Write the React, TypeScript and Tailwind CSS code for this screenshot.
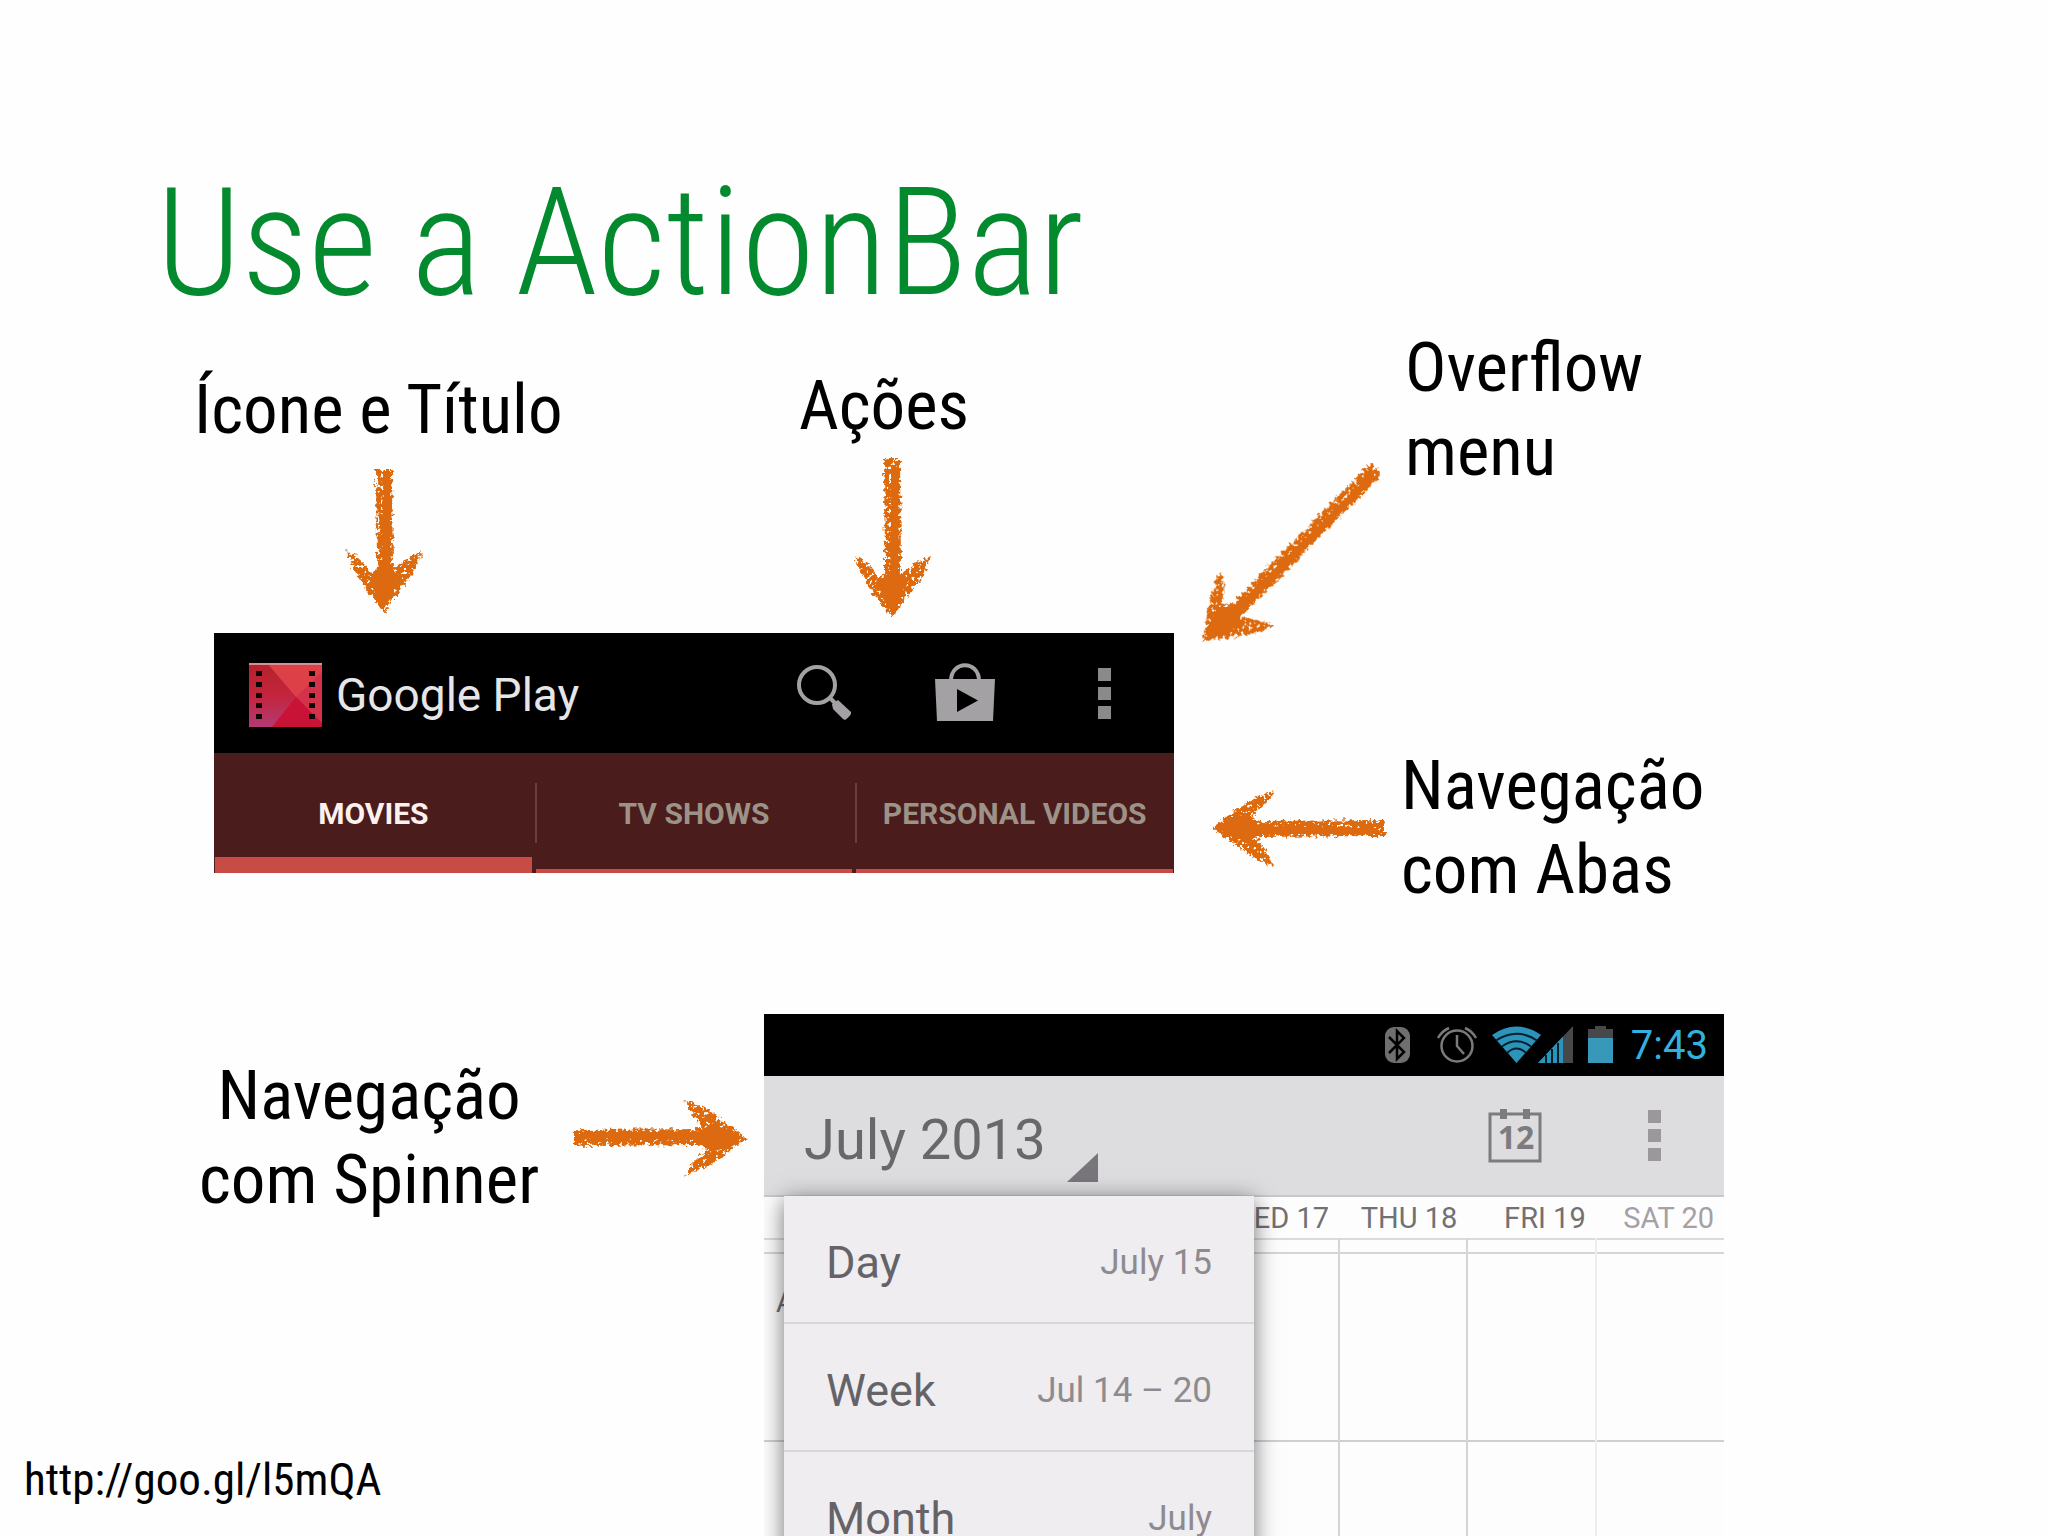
import type { ReactNode } from "react";

type ArrowProps = { length: number; angle: number; seed: number; className: string; viewBox: string };

/* A hand-drawn arrow with its tip at the origin, pointing down before it is rotated. */
function ChalkArrow({ length, angle, seed, className, viewBox }: ArrowProps) {
  const id = `chalk-${seed}`;
  const top = -length;
  return (
    <svg className={className} viewBox={viewBox} fill="none" aria-hidden="true">
      <defs>
        <filter id={id} x="-20%" y="-10%" width="140%" height="120%">
          <feTurbulence type="fractalNoise" baseFrequency="0.25" numOctaves="2" seed={seed} result="edge" />
          <feDisplacementMap in="SourceGraphic" in2="edge" scale="8" xChannelSelector="R" yChannelSelector="G" result="rough" />
          <feTurbulence type="fractalNoise" baseFrequency="0.3" numOctaves="2" seed={seed + 7} result="grain" />
          <feColorMatrix in="grain" type="matrix" values="0 0 0 0 0  0 0 0 0 0  0 0 0 0 0  14 0 0 0 -4.4" result="mask" />
          <feComposite in="rough" in2="mask" operator="in" />
        </filter>
      </defs>
      <g transform={`rotate(${angle})`}>
        <path
          filter={`url(#${id})`}
          fill="#dd6a10"
          d={`M-8 ${top} L8 ${top} L9 -43 Q22 -54 38 -61 Q35 -44 21 -28 Q10 -14 0 1 Q-10 -12 -19 -24 Q-31 -42 -38 -61 Q-24 -56 -13 -39 L-7 -45 Z`}
        />
        <path fill="#dd6a10" d={`M0 ${top + 8} L6 ${top + 8} L6 -46 L14 -36 L8 -16 L0 -4 L-9 -18 L-14 -34 L-2 -46 Z`} />
      </g>
    </svg>
  );
}

function Label({ children, className = "" }: { children: ReactNode; className?: string }) {
  return <p className={`text-[69px] leading-[84px] whitespace-nowrap text-black ${className}`}>{children}</p>;
}

function Overflow({ className }: { className: string }) {
  return (
    <button aria-label="More options" className="flex w-[13px] flex-col gap-[6px]">
      <span className={`h-[13px] w-full ${className}`} />
      <span className={`h-[13px] w-full ${className}`} />
      <span className={`h-[13px] w-full ${className}`} />
    </button>
  );
}

function FilmIcon() {
  const holes = [8, 19, 30, 40, 51];
  return (
    <svg className="h-16 w-[73px] shrink-0" viewBox="0 0 73 64" aria-hidden="true">
      <defs>
        <linearGradient id="film-left" x1="0" y1="0" x2="0" y2="1">
          <stop offset="0" stopColor="#b3222c" />
          <stop offset="0.5" stopColor="#c4243c" />
          <stop offset="1" stopColor="#b23a72" />
        </linearGradient>
        <linearGradient id="film-top" x1="0" y1="0" x2="0" y2="1">
          <stop offset="0" stopColor="#de4145" />
          <stop offset="1" stopColor="#dd3c50" />
        </linearGradient>
      </defs>
      <path fill="url(#film-left)" d="M0 0H73V64H0Z" />
      <path fill="url(#film-top)" d="M18 0H73V60L47 34Z" />
      <path fill="#d2324a" d="M73 9V60L47 34Z" />
      <path fill="#c81236" d="M47 34L73 60V64H23Z" />
      <path fill="#d98d95" d="M0 0H73V2H0Z" />
      {holes.map((y) => (
        <g key={y} fill="#120508">
          <path d={`M7 ${y}h6v5h-6z`} />
          <path d={`M60 ${y}h6v5h-6z`} />
        </g>
      ))}
    </svg>
  );
}

function PlayBar() {
  const tabs = ["MOVIES", "TV SHOWS", "PERSONAL VIDEOS"];
  return (
    <div className="w-[960px] shrink-0">
      <div className="flex h-[120px] items-center bg-black pr-[63px] pl-[35px]">
        <div className="flex items-center pt-1">
          <FilmIcon />
          <span className="ml-[14px] text-[46px] leading-[54px] text-[#e6e5e8]">Google Play</span>
        </div>
        <div className="ml-auto flex items-center">
          <button aria-label="Search">
            <svg className="h-[60px] w-[60px]" viewBox="0 0 60 60" fill="none" aria-hidden="true">
              <circle cx="20" cy="22" r="18" stroke="#a3a1a4" strokeWidth="4" />
              <path stroke="#a3a1a4" strokeWidth="4" d="M32 34L38 40" />
              <path fill="#a3a1a4" d="M35 41L41 37L54 49Q55 52 48 57L46 56L36 46Z" />
            </svg>
          </button>
          <button aria-label="Shop" className="ml-[78px]">
            <svg className="h-[60px] w-[60px]" viewBox="0 0 60 60" fill="none" aria-hidden="true">
              <path stroke="#a3a1a4" strokeWidth="4" d="M16 18C16 -3 44 -3 44 18" />
              <path fill="#a3a1a4" d="M0 16H60L58 58H2Z" />
              <path fill="#000" d="M22 26L43 37.500L22 49Z" />
            </svg>
          </button>
          <div className="ml-[103px] flex">
            <Overflow className="bg-[#8b898c]" />
          </div>
        </div>
      </div>
      <div role="tablist" className="flex h-[120px] gap-[2px] bg-[#4b1c1c]">
        {tabs.map((tab, i) => (
          <button
            key={tab}
            role="tab"
            aria-selected={i === 0}
            className={`relative flex flex-1 items-center justify-center pt-[2px] text-[30px] leading-9 font-bold ${
              i === 0 ? "text-[#fdf1ee]" : "text-[#9c9287]"
            }`}
          >
            {tab}
            <span className={`absolute inset-x-[1px] bottom-0 bg-[#c94b45] ${i === 0 ? "h-4" : "h-1"}`} />
            {i > 0 && <span className="absolute top-[30px] left-0 h-[60px] w-[2px] bg-[#6e3c3b]" />}
          </button>
        ))}
      </div>
    </div>
  );
}

function StatusBar() {
  return (
    <div className="flex h-[62px] shrink-0 items-center bg-black pr-4">
      <svg className="ml-auto h-[38px] w-[232px]" viewBox="0 0 232 38" fill="none" aria-hidden="true">
        <rect x="1" y="1" width="25" height="36" rx="9" fill="#6f6e70" />
        <path stroke="#000" strokeWidth="2.500" d="M5 11L20 26L13 33V5L20 12L5 27" />
        <g stroke="#7b797c" strokeWidth="2.500">
          <circle cx="73" cy="20" r="15.500" />
          <path d="M73 9V20L80 28" />
          <path d="M54 12Q58 5 65 2M81 2Q88 5 92 12" />
        </g>
        <path fill="#2c93bb" d="M108 9Q132 -8 157 9L132.500 37Z" />
        <path stroke="#05202b" strokeWidth="2" d="M112 14.500Q132.500 1 153 14.500M118 20.500Q132.500 10 147 20.500M123 27Q132.500 18 142 27" />
        <path fill="#48474a" d="M189 0V37H154Z" />
        <path fill="#2c93bb" d="M179 10.500V37H154Z" />
        <path stroke="#05202b" strokeWidth="2" d="M162 29V37M168 23V37M174 17V37" />
        <path fill="#48474a" d="M204 3H211V0H222V3H229V13H204Z" />
        <path fill="#3798b9" d="M204 12H229V37H204Z" />
      </svg>
      <span className="ml-[15px] pt-[2px] text-[40px] leading-[48px] text-[#33b0df]">7:43</span>
    </div>
  );
}

function CalendarIcon() {
  return (
    <svg className="h-[54px] w-[54px]" viewBox="0 0 54 54" fill="none" aria-hidden="true">
      <rect x="2" y="5" width="50" height="47" stroke="#7d7b7e" strokeWidth="3" />
      <path fill="#7d7b7e" d="M12 0H19V10H12ZM35 0H42V10H35Z" />
      <text x="28" y="40" textAnchor="middle" fill="#7d7b7e" fontSize="32" fontWeight="700" fontFamily="Open Sans, sans-serif">
        12
      </text>
    </svg>
  );
}

function CalendarScreen() {
  const days = ["", "", "", "WED 17", "THU 18", "FRI 19", "SAT 20"];
  const views = [
    ["Day", "July 15"],
    ["Week", "Jul 14 – 20"],
    ["Month", "July"],
  ];
  const line = "border-l-2 border-[#d6d4d8]";
  return (
    <div className="relative flex w-[960px] shrink-0 flex-col overflow-hidden bg-[#fdfdfe]">
      <StatusBar />
      <div className="flex h-[121px] shrink-0 items-center border-b-2 border-[#c9c7cb] bg-[#dddcdf] pr-[63px] pl-[40px]">
        <button className="flex items-center text-[56px] leading-[64px] text-[#69676b]">
          <span className="pt-2">July 2013</span>
          <svg className="mt-[64px] ml-[21px] h-[29px] w-[31px]" viewBox="0 0 31 29" aria-hidden="true">
            <path fill="#78767a" d="M31 0V29H0Z" />
          </svg>
        </button>
        <button aria-label="Today" className="ml-auto">
          <CalendarIcon />
        </button>
        <div className="ml-[106px] flex">
          <Overflow className="bg-[#9a989b]" />
        </div>
      </div>
      <table className="w-full table-fixed border-collapse text-[29px] leading-8 text-[#717073]">
        <colgroup>
          <col className="w-[62px]" />
        </colgroup>
        <thead>
          <tr className="h-[42px] border-b-2 border-[#dcdade]">
            <th />
            {days.map((day, i) => (
              <th key={i} className={`pr-[10px] text-right font-normal whitespace-nowrap ${i === 6 ? "text-[#a3a1a5]" : ""}`}>
                {day}
              </th>
            ))}
          </tr>
        </thead>
        <tbody>
          <tr className="h-[14px] border-b-2 border-[#d6d4d8]">
            <th />
            {days.map((_, i) => (
              <td key={i} className={i === 6 ? "border-l-2 border-[#efedf1]" : line} />
            ))}
          </tr>
          <tr className="h-[188px] border-b-2 border-[#d0ced2]">
            <th className="pt-[32px] pl-3 text-left align-top font-normal">A</th>
            {days.map((_, i) => (
              <td key={i} className={i === 6 ? "border-l-2 border-[#efedf1]" : line} />
            ))}
          </tr>
          <tr className="h-[188px]">
            <th />
            {days.map((_, i) => (
              <td key={i} className={i === 6 ? "border-l-2 border-[#efedf1]" : line} />
            ))}
          </tr>
        </tbody>
      </table>
      <ul className="absolute top-[182px] left-5 w-[470px] bg-[#efedf0] shadow-[0_4px_22px_rgba(0,0,0,0.55)]">
        {views.map(([name, range]) => (
          <li key={name} className="border-b-2 border-[#d8d6da]">
            <button className="flex h-[126px] w-full items-center justify-between px-[42px] pt-2">
              <span className="text-[45px] leading-[52px] text-[#656367]">{name}</span>
              <span className="text-[35px] leading-[42px] text-[#8d8b8f]">{range}</span>
            </button>
          </li>
        ))}
      </ul>
    </div>
  );
}

export default function App() {
  return (
    <main className="flex h-screen flex-col overflow-hidden bg-[#fefefe] font-['Roboto_Condensed','Roboto',sans-serif]">
      <h1 className="pt-[152px] pl-[156px] text-[150px] leading-[182px] font-light text-[#048a2e]">Use a ActionBar</h1>

      <section className="flex pl-[214px]">
        <div className="w-[960px] shrink-0">
          <div className="flex h-[299px] justify-between pt-[30px] pr-[205px]">
            <div className="-ml-5 flex flex-col items-center">
              <Label className="mt-1">Ícone e Título</Label>
              <ChalkArrow length={143} angle={0} seed={3} viewBox="-45 -150 90 160" className="mt-[10px] ml-3 h-[160px] w-[90px]" />
            </div>
            <div className="flex flex-col items-center">
              <Label>Ações</Label>
              <ChalkArrow length={158} angle={0} seed={11} viewBox="-45 -165 90 175" className="mt-1 ml-4 h-[175px] w-[90px]" />
            </div>
          </div>
          <div className="font-['Roboto',sans-serif]">
            <PlayBar />
          </div>
        </div>
        <div className="flex flex-col">
          <div className="flex pl-[20px]">
            <ChalkArrow length={244} angle={45} seed={5} viewBox="-10 -190 200 200" className="mt-[117px] h-[200px] w-[200px]" />
            <Label className="-mt-2 ml-[11px]">
              Overflow
              <br />
              menu
            </Label>
          </div>
          <div className="mt-[93px] flex items-center pl-[34px]">
            <ChalkArrow length={172} angle={90} seed={8} viewBox="-5 -45 180 90" className="h-[90px] w-[180px]" />
            <Label className="ml-[13px]">
              Navegação
              <br />
              com Abas
            </Label>
          </div>
        </div>
      </section>

      <section className="mt-[102px] flex min-h-0 flex-1">
        <div className="flex w-[764px] shrink-0 flex-col justify-between">
          <div className="flex items-center pt-10 pl-[199px]">
            <Label className="text-center">
              Navegação
              <br />
              com Spinner
            </Label>
            <ChalkArrow length={172} angle={-90} seed={14} viewBox="-175 -45 180 90" className="ml-8 h-[90px] w-[180px]" />
          </div>
          <a href="http://goo.gl/l5mQA" className="mb-7 pl-6 text-[45px] leading-[56px] text-black">
            http://goo.gl/l5mQA
          </a>
        </div>
        <div className="flex font-['Roboto',sans-serif]">
          <CalendarScreen />
        </div>
      </section>
    </main>
  );
}
